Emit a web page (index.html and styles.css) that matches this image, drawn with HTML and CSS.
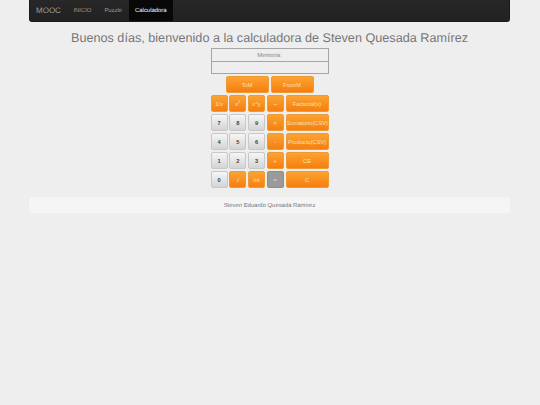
FILE: index.html
```html
<!DOCTYPE html>
<html lang="es">
<head>
<meta charset="utf-8">
<title>Calculadora</title>
<link rel="stylesheet" href="styles.css">
</head>
<body>
<div class="container">
  <nav class="navbar">
    <span class="brand">MOOC</span>
    <a class="nav-link">INICIO</a>
    <a class="nav-link">Puzzle</a>
    <a class="nav-link active">Calculadora</a>
  </nav>
  <h1 class="title">Buenos días, bienvenido a la calculadora de Steven Quesada Ramírez</h1>
  <div class="calc">
    <div class="mem-label">Memoria:</div>
    <div class="mem-input"></div>
    <div class="mem-buttons">
      <button class="btn orange">ToM</button>
      <button class="btn orange">FromM</button>
    </div>
    <div class="keys">
      <button class="btn orange">1/x</button>
      <button class="btn orange">x<sup>2</sup></button>
      <button class="btn orange">x^y</button>
      <button class="btn orange">÷</button>
      <button class="btn orange">Factorial(x)</button>
      <button class="btn light">7</button>
      <button class="btn light">8</button>
      <button class="btn light">9</button>
      <button class="btn orange">×</button>
      <button class="btn orange">Sumatorio(CSV)</button>
      <button class="btn light">4</button>
      <button class="btn light">5</button>
      <button class="btn light">6</button>
      <button class="btn orange">-</button>
      <button class="btn orange">Producto(CSV)</button>
      <button class="btn light">1</button>
      <button class="btn light">2</button>
      <button class="btn light">3</button>
      <button class="btn orange">+</button>
      <button class="btn orange">CE</button>
      <button class="btn light">0</button>
      <button class="btn orange">√</button>
      <button class="btn orange">Int</button>
      <button class="btn gray">=</button>
      <button class="btn orange">C</button>
    </div>
  </div>
  <footer class="footer">Steven Eduardo Quesada Ramírez</footer>
</div>
</body>
</html>
```
FILE: styles.css
```css
* { box-sizing: border-box; }
html, body { margin: 0; height: 100%; }
body {
  background: #eeeeee;
  font-family: "Liberation Sans", Arial, sans-serif;
  color: #777;
  text-rendering: geometricPrecision;
}
.container { width: 481px; margin-left: 29px; }
.navbar {
  height: 22px;
  display: flex;
  align-items: stretch;
  background: linear-gradient(#272727, #212121);
  border-radius: 0 0 3px 3px;
  border: 1px solid #1a1a1a;
  border-top: 0;
}
.brand {
  font-size: 8px;
  line-height: 22px;
  padding: 0 6px;
  color: #9d9d9d;
}
.nav-link {
  font-size: 5.9px;
  line-height: 22px;
  padding: 0 6.5px;
  color: #9d9d9d;
}
.nav-link.active { background: #080808; color: #fff; }
.title {
  margin: 8px 0 0;
  height: 18px;
  font-size: 12.65px;
  line-height: 16px;
  font-weight: 400;
  text-align: center;
  color: #777;
  white-space: nowrap;
}
.calc {
  width: 118px;
  margin: 0 auto;
}
.mem-label {
  height: 14px;
  border: 1px solid #a5a5a5;
  font-size: 5.9px;
  line-height: 15px;
  text-align: center;
  color: #888;
}
.mem-input {
  height: 13px;
  margin-top: -1px;
  border: 1px solid #a5a5a5;
}
.mem-buttons {
  display: flex;
  justify-content: center;
  gap: 2px;
  margin-top: 2px;
}
.mem-buttons .btn { width: 43px; height: 17px; }
.keys {
  display: grid;
  grid-template-columns: 17px 17px 17px 17px 43px;
  grid-auto-rows: 17px;
  gap: 2px 1.75px;
  margin-top: 2px;
}
.btn {
  padding: 0;
  margin: 0;
  font-family: inherit;
  font-size: 5.7px;
  border-radius: 2px;
  white-space: nowrap;
  overflow: hidden;
}
.btn sup { font-size: 4px; line-height: 0; }
.orange {
  background: linear-gradient(#fba332, #f57f0f);
  border: 1px solid #ef9a33;
  color: #f8e0bd;
}
.light {
  background: linear-gradient(#f6f6f6, #d4d4d4);
  border: 1px solid #c8c8c8;
  color: #444;
  font-weight: 700;
}
.gray {
  background: #9a9a9a;
  border: 1px solid #8e8e8e;
  color: #ddd;
}
.footer {
  margin-top: 9px;
  height: 16px;
  background: #f5f5f5;
  border-radius: 2px;
  font-size: 5.9px;
  line-height: 18px;
  text-align: center;
  color: #777;
}
```
